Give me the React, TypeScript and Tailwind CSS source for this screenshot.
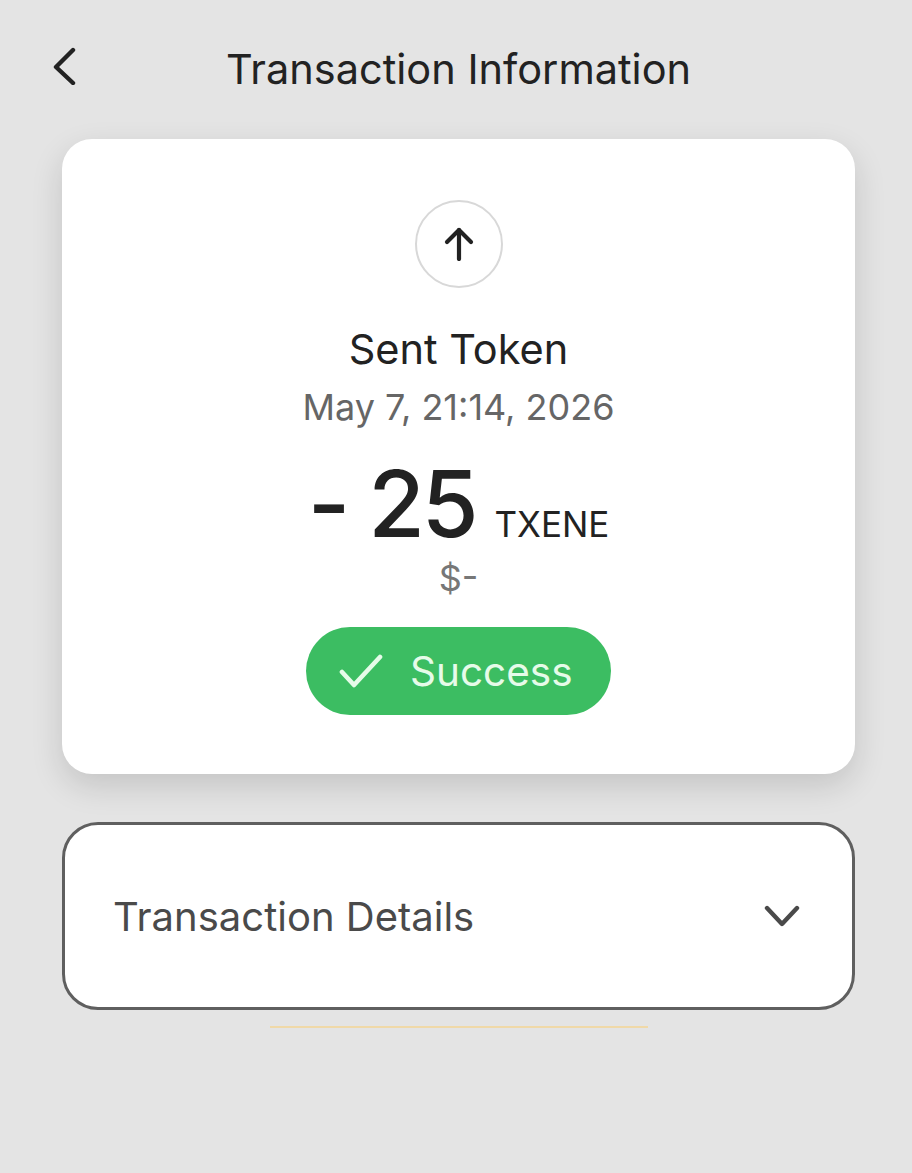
export default function App() {
  return (
    <main className="min-h-[1173px] bg-[#e4e4e4] font-['Inter',sans-serif] pl-[62px] pr-[57px] pt-[44px]">
      <header className="relative flex h-[50px] items-center justify-center">
        <svg className="absolute left-[-10px] top-[3px] text-[#222222]" width="24" height="38" viewBox="0 0 24 38" fill="none" stroke="currentColor" strokeWidth="4.4" strokeLinecap="round" strokeLinejoin="round">
          <polyline points="21,3 4,20 21,36" />
        </svg>
        <h1 className="text-[41.5px] leading-[50px] text-[#222222]">Transaction Information</h1>
      </header>

      <section className="mt-[45px] flex h-[635px] flex-col items-center rounded-[30px] bg-white pt-[61px] shadow-[0_12px_32px_rgba(0,0,0,0.14)]">
        <div className="flex h-[88px] w-[88px] items-center justify-center rounded-full border-2 border-[#d8d8d8]">
          <svg className="text-[#222222]" width="30" height="34" viewBox="0 0 30 34" fill="none" stroke="currentColor" strokeWidth="4.2" strokeLinecap="round" strokeLinejoin="round">
            <polyline points="3,15 15,3 27,15" />
            <line x1="15" y1="3" x2="15" y2="32" />
          </svg>
        </div>
        <h2 className="mt-[36px] text-[41.5px] leading-[50px] text-[#222222]">Sent Token</h2>
        <p className="mt-[8px] text-[36px] leading-[50px] text-[#666666]">May 7, 21:14, 2026</p>
        <div className="mt-[26px] flex h-[92px] items-baseline">
          <span className="text-[92px] leading-[92px] font-medium tracking-[-0.035em] text-[#222222]">- 25</span>
          <span className="ml-[19px] text-[35px] text-[#222222]">TXENE</span>
        </div>
        <p className="mt-[7px] text-[36px] leading-[42px] text-[#777777]">$-</p>
        <div className="mt-[28px] flex h-[88px] w-[305px] items-center gap-[27px] rounded-full bg-[#3cbd62] pl-[33px] text-[#e6fbe9]">
          <svg width="44" height="34" viewBox="0 0 44 34" fill="none" stroke="currentColor" strokeWidth="4.6" strokeLinecap="round" strokeLinejoin="round">
            <polyline points="3,18 15,31 41,3" />
          </svg>
          <span className="mt-[3px] text-[40.5px] leading-none">Success</span>
        </div>
      </section>

      <section className="mt-[48px] flex h-[188px] items-center justify-between rounded-[36px] border-[3px] border-[#5f5f5f] bg-white pl-[48px] pr-[52px]">
        <span className="mt-[2px] text-[40px] leading-[50px] text-[#4a4a4a]">Transaction Details</span>
        <svg className="text-[#4a4a4a]" width="36" height="22" viewBox="0 0 36 22" fill="none" stroke="currentColor" strokeWidth="4.4" strokeLinecap="round" strokeLinejoin="round">
          <polyline points="3,3 18,19 33,3" />
        </svg>
      </section>

      <div className="mx-auto mt-[16px] h-[2px] w-[378px] bg-[#f0d9a8]" />
    </main>
  );
}
